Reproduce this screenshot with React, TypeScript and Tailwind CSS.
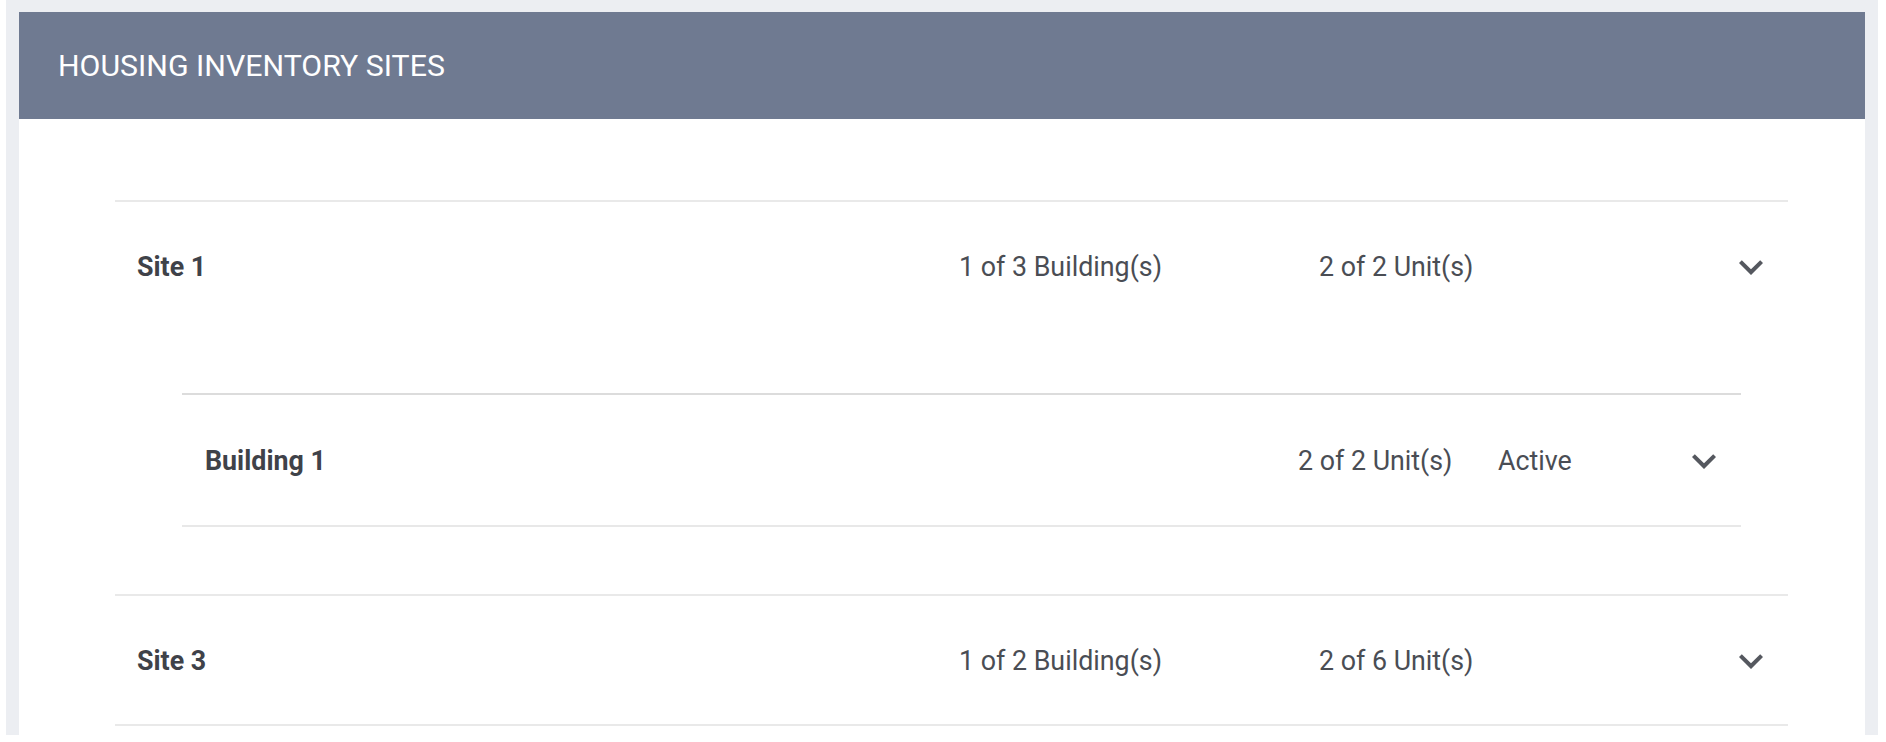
import React from 'react'

const font = "font-['Roboto','Liberation_Sans',sans-serif]"

function Chevron() {
  return (
    <svg width="48" height="48" viewBox="0 0 24 24" className="shrink-0" aria-hidden="true">
      <path d="M16.59 8.59L12 13.17 7.41 8.59 6 10l6 6 6-6z" fill="#55585f" />
    </svg>
  )
}

interface SiteRowProps {
  name: string
  buildings: string
  units: string
}

function SiteHeader({ name, buildings, units }: SiteRowProps) {
  return (
    <div className="flex h-[128px] items-center pl-[22px] pr-[13px] pt-[2px]">
      <div className="w-[822px] text-[26.8px] font-bold text-[#3f4249]">{name}</div>
      <div className="w-[360px] text-[26.8px] text-[#4a4d54]">{buildings}</div>
      <div className="flex-1 text-[26.8px] text-[#4a4d54]">{units}</div>
      <Chevron />
    </div>
  )
}

function BuildingPanel() {
  return (
    <div className="ml-[67px] w-[1559px] border-t-2 border-b-2 border-t-[#dcdcdc] border-b-[#e8e8e8]">
      <div className="flex h-[130px] items-center pl-[23px] pr-[13px] pt-[2px]">
        <div className="flex-1 text-[26.8px] font-bold text-[#3f4249]">Building 1</div>
        <div className="w-[200px] text-[26.8px] text-[#4a4d54]">2 of 2 Unit(s)</div>
        <div className="w-[182px] text-[26.8px] text-[#4a4d54]">Active</div>
        <Chevron />
      </div>
    </div>
  )
}

export default function App() {
  return (
    <div className={`min-h-screen bg-white ${font}`}>
      <div className="ml-[6px] h-[735px] w-[1872px] overflow-hidden bg-[#eceef2] pl-[13px] pt-[12px]">
        <div className="min-h-[800px] w-[1846px] bg-white">
          {/* panel title */}
          <div className="flex h-[107px] items-center bg-[#6f7a91] pl-[39px]">
            <h1 className="text-[30.3px] font-normal text-white">HOUSING INVENTORY SITES</h1>
          </div>

          <div className="ml-[96px] w-[1673px] pt-[81px]">
            {/* Site 1, expanded */}
            <div className="border-t-2 border-[#e9e9e9]">
              <SiteHeader name="Site 1" buildings="1 of 3 Building(s)" units="2 of 2 Unit(s)" />
              <div className="pb-[67px] pt-[63px]">
                <BuildingPanel />
              </div>
            </div>

            {/* Site 3, collapsed */}
            <div className="border-t-2 border-b-2 border-[#e9e9e9]">
              <SiteHeader name="Site 3" buildings="1 of 2 Building(s)" units="2 of 6 Unit(s)" />
            </div>
          </div>
        </div>
      </div>
    </div>
  )
}
